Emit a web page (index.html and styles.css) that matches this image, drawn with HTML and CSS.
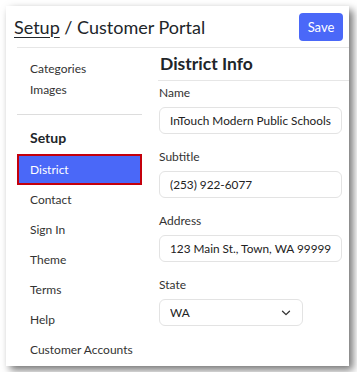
FILE: index.html
```html
<!DOCTYPE html>
<html lang="en">
<head>
    <meta charset="UTF-8">
    <meta name="viewport" content="width=device-width, initial-scale=1.0">
    <title>Customer Portal</title>
    <link rel="stylesheet" href="styles.css">
</head>
<body>
    <div class="card">
        <div class="header">
            <h1 class="title"><a href="#">Setup</a> / Customer Portal</h1>
            <button type="button" class="save">Save</button>
        </div>
        <div class="content">
            <div class="sidebar">
                <a class="nav-item small" href="#">Categories</a>
                <a class="nav-item small" href="#">Images</a>
                <div class="nav-sep"></div>
                <div class="nav-title">Setup</div>
                <a class="nav-item active" href="#">District</a>
                <a class="nav-item" href="#">Contact</a>
                <a class="nav-item" href="#">Sign In</a>
                <a class="nav-item" href="#">Theme</a>
                <a class="nav-item" href="#">Terms</a>
                <a class="nav-item" href="#">Help</a>
                <a class="nav-item" href="#">Customer Accounts</a>
            </div>
            <div class="main">
                <h2 class="section-title">District Info</h2>
                <div class="field first">
                    <label>Name</label>
                    <input type="text" value="InTouch Modern Public Schools">
                </div>
                <div class="field">
                    <label>Subtitle</label>
                    <input type="text" value="(253) 922-6077">
                </div>
                <div class="field">
                    <label>Address</label>
                    <input type="text" value="123 Main St., Town, WA 99999">
                </div>
                <div class="field">
                    <label>State</label>
                    <div class="select-wrap">
                        <select>
                            <option>WA</option>
                        </select>
                        <svg class="chevron" width="10" height="6" viewBox="0 0 10 6">
                            <path d="M1.5 1.2l3.5 3.4 3.5-3.4" fill="none" stroke="#333" stroke-width="1.3" stroke-linecap="round" stroke-linejoin="round"/>
                        </svg>
                    </div>
                </div>
            </div>
        </div>
    </div>
</body>
</html>
```

FILE: styles.css
```css
*{
    margin: 0;
    padding: 0;
    box-sizing: border-box;
}
body{
    background-color: #fff;
    font-family: "Lato", "Liberation Sans", sans-serif;
    color: #212529;
}
.card{
    margin: 6px;
    width: 343px;
    height: 360px;
    background-color: #fff;
    box-shadow: 4px 4px 8px rgba(0,0,0,.55);
    overflow: hidden;
}
.header{
    display: flex;
    align-items: center;
    justify-content: space-between;
    height: 41px;
    padding: 0 6px 0 8px;
}
.title{
    font-size: 18px;
    font-weight: normal;
}
.title a{
    color: #212529;
    text-decoration: underline;
    text-underline-offset: 3px;
    text-decoration-thickness: 1px;
}
.save{
    width: 44px;
    height: 28px;
    border: none;
    border-radius: 4px;
    background-color: #4a68f8;
    color: #fff;
    font-family: inherit;
    font-size: 13px;
    margin-top: 1px;
}
.content{
    display: flex;
    gap: 16px;
    margin-left: 11px;
    border-top: 1px solid #e6e6e6;
}
.sidebar{
    width: 125px;
    flex-shrink: 0;
    display: flex;
    flex-direction: column;
    padding-top: 10px;
}
.nav-item{
    display: block;
    height: 30px;
    line-height: 30px;
    padding-left: 13px;
    font-size: 12px;
    color: #333;
    text-decoration: none;
    white-space: nowrap;
}
.nav-item.small{
    height: 21px;
    line-height: 21px;
}
.nav-sep{
    border-top: 1px solid #ddd;
    margin: 14px 0 11px;
}
.nav-title{
    height: 24px;
    line-height: 24px;
    padding-left: 13px;
    font-size: 14px;
    font-weight: bold;
    margin-bottom: 4px;
}
.nav-item.active{
    height: 31px;
    line-height: 27px;
    padding-left: 11px;
    background-color: #4a68f8;
    border: 2px solid #c4000c;
    color: #fff;
}
.main{
    flex: 1;
    min-width: 0;
}
.section-title{
    font-size: 17.5px;
    font-weight: bold;
    height: 24px;
    line-height: 24px;
    margin: 4px 0 0 2px;
}
.field{
    display: flex;
    flex-direction: column;
    gap: 5px;
    margin-bottom: 14px;
    padding-left: 1px;
}
.field.first{
    border-top: 1px solid #e6e6e6;
    margin-top: 4px;
    padding-top: 3px;
}
.field label{
    font-size: 12px;
    line-height: 18px;
    color: #333;
}
.field input, .field select{
    width: 183px;
    height: 27px;
    border: 1px solid #e3e3e3;
    border-radius: 6px;
    padding: 0 2px 0 10px;
    font-family: inherit;
    font-size: 11.8px;
    color: #222;
    background-color: #fff;
}
.select-wrap{
    position: relative;
    width: 144px;
}
.field select{
    width: 144px;
    appearance: none;
    -webkit-appearance: none;
}
.chevron{
    position: absolute;
    right: 12px;
    top: 11px;
}
```
